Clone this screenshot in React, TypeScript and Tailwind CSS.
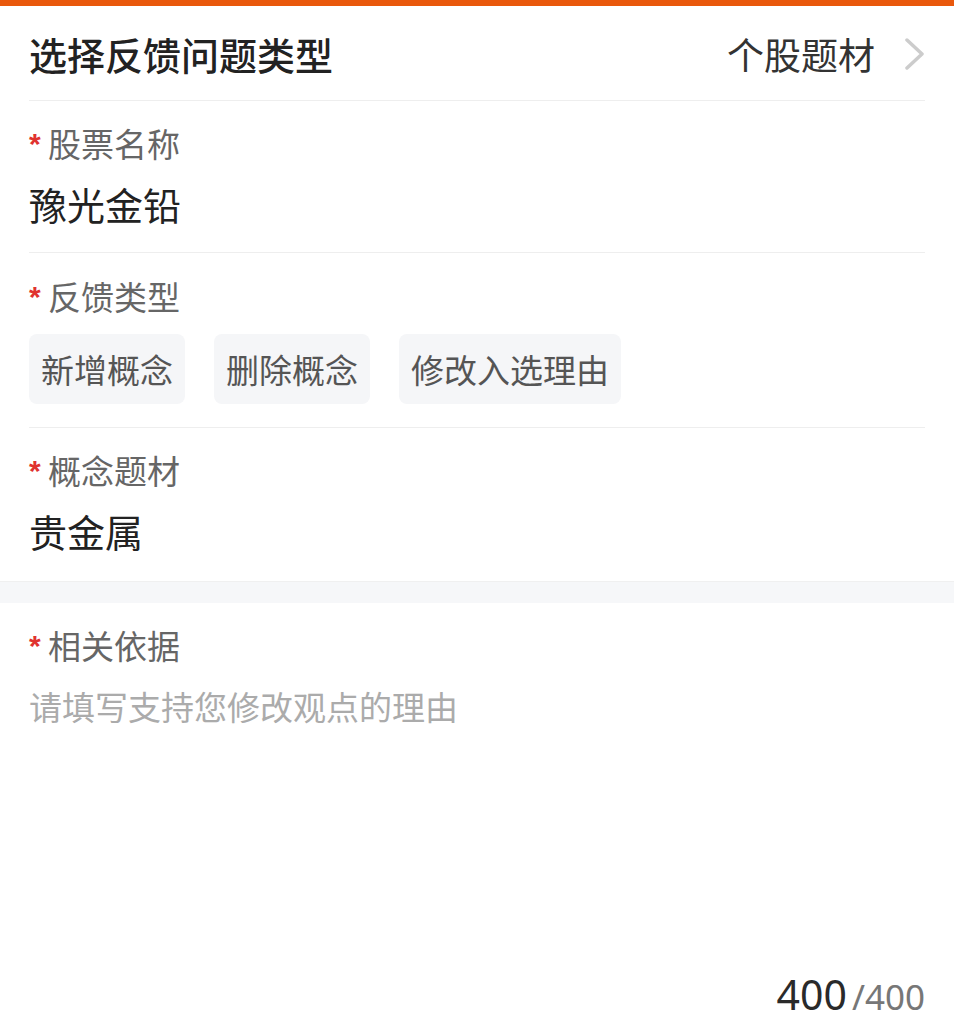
import React from "react";

const font = { fontFamily: '"Noto Sans CJK SC", "Noto Sans", sans-serif' };

function Label({ text }: { text: string }) {
  return (
    <div className="h-[33px] flex items-start text-[33px] leading-[33px] text-[#666666]">
      <span
        className="text-[#e0332f] text-[30px] leading-[24px] font-bold w-[19px] mt-[5px]"
        style={{ fontFamily: '"Liberation Sans", sans-serif' }}
      >
        *
      </span>
      <span>{text}</span>
    </div>
  );
}

function Chip({ text }: { text: string }) {
  return (
    <div className="h-[70px] px-[12px] flex items-center rounded-[8px] bg-[#f5f6f8] text-[33px] leading-[33px] text-[#555555]">
      {text}
    </div>
  );
}

export default function App() {
  return (
    <div className="w-[954px] h-[1024px] bg-white flex flex-col overflow-hidden" style={font}>
      <div className="h-[6px] bg-[#e9580c]" />
      <div className="mx-[29px] h-[95px] flex items-center justify-between border-b border-[#eeeeee]">
        <span className="text-[38px] leading-[38px] font-medium text-[#222222] mt-[2px]">选择反馈问题类型</span>
        <div className="flex items-center mt-[2px]">
          <span className="text-[37px] leading-[37px] text-[#333333]">个股题材</span>
          <svg width="20" height="32" viewBox="0 0 20 32" className="ml-[30px]">
            <polyline points="2,2 17,16 2,30" fill="none" stroke="#cccccc" strokeWidth="3.5" strokeLinecap="round" strokeLinejoin="round" />
          </svg>
        </div>
      </div>

      <div className="mx-[29px] pt-[26px] pb-[29px] border-b border-[#eeeeee] flex flex-col">
        <Label text="股票名称" />
        <div className="mt-[25px] text-[38px] leading-[38px] text-[#222222]">豫光金铅</div>
      </div>

      <div className="mx-[29px] pt-[27px] pb-[23px] border-b border-[#eeeeee] flex flex-col">
        <Label text="反馈类型" />
        <div className="mt-[21px] flex gap-[29px]">
          <Chip text="新增概念" />
          <Chip text="删除概念" />
          <Chip text="修改入选理由" />
        </div>
      </div>

      <div className="mx-[29px] pt-[26px] pb-[31px] flex flex-col">
        <Label text="概念题材" />
        <div className="mt-[25px] text-[38px] leading-[38px] text-[#222222]">贵金属</div>
      </div>

      <div className="h-[22px] bg-[#f6f7f9] border-t border-[#f0f0f0]" />

      <div className="flex-1 mx-[29px] pt-[26px] flex flex-col">
        <Label text="相关依据" />
        <div className="mt-[28px] text-[33px] leading-[33px] text-[#ababab]">请填写支持您修改观点的理由</div>
        <div className="mt-auto pb-[3px] flex justify-end items-baseline" style={{ fontFamily: '"Noto Sans", sans-serif' }}>
          <span className="text-[41px] leading-[48px] text-[#2a2a2a]">400</span>
          <span className="ml-[5px] text-[35px] leading-[48px] text-[#777777]">/400</span>
        </div>
      </div>
    </div>
  );
}
